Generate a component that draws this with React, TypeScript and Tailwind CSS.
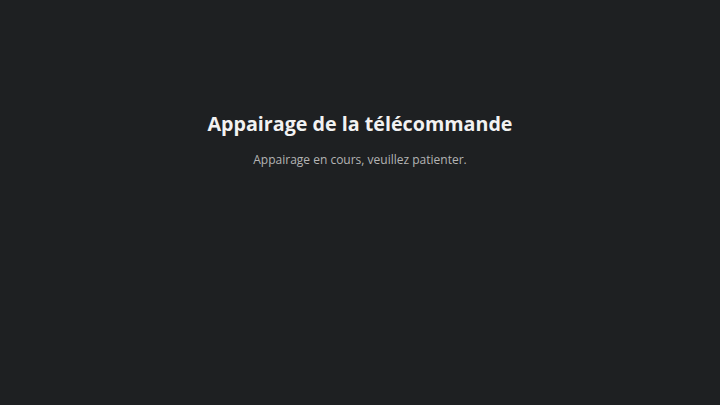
export default function App() {
  return (
    <div
      className="w-[720px] h-[405px] bg-[#1e2022] flex flex-col items-center pt-[111px]"
      style={{ fontFamily: '"Open Sans", "Noto Sans", sans-serif' }}
    >
      <h1 className="text-[19.7px] leading-[26px] font-bold text-[#f2f2f2]">
        Appairage de la télécommande
      </h1>
      <p className="mt-[15px] text-[12px] leading-[16px] text-[#b4b4b4]">
        Appairage en cours, veuillez patienter.
      </p>
    </div>
  )
}
